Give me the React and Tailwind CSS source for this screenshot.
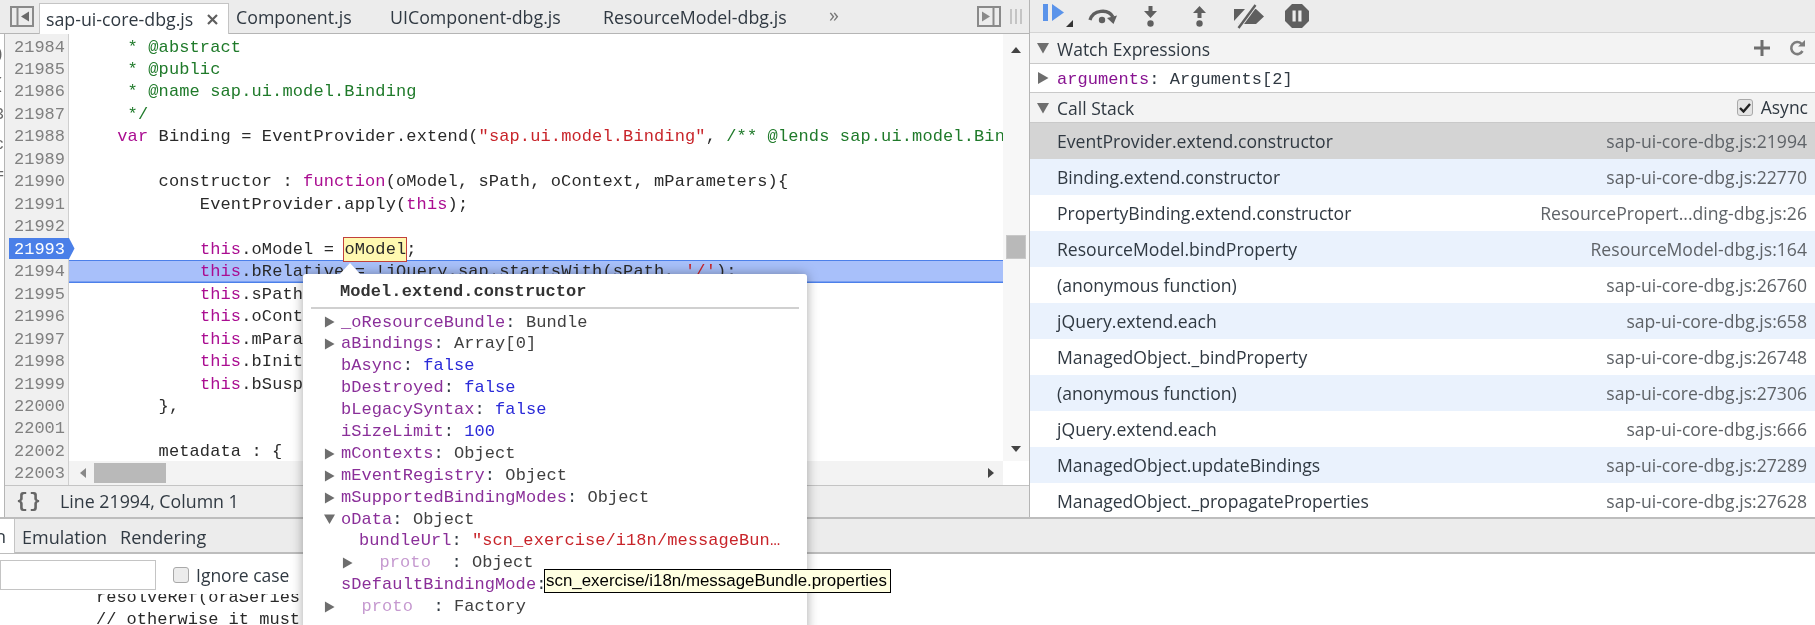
const P = 'text-[#aa0d91]';
const G = 'text-[#1f7a2a]';
const R = 'text-[#c8242a]';

const LINES = [
  [21984, [['     * @abstract', G]]],
  [21985, [['     * @public', G]]],
  [21986, [['     * @name sap.ui.model.Binding', G]]],
  [21987, [['     */', G]]],
  [21988, [['    '], ['var', P], [' Binding = EventProvider.extend('], ['"sap.ui.model.Binding"', R], [', '], ['/** @lends sap.ui.model.Binding.prototype */', G]]],
  [21989, []],
  [21990, [['        constructor : '], ['function', P], ['(oModel, sPath, oContext, mParameters){']]],
  [21991, [['            EventProvider.apply('], ['this', P], [');']]],
  [21992, []],
  [21993, [['            '], ['this', P], ['.oModel = '], ['oModel', 'hit'], [';']]],
  [21994, [['            '], ['this', P], ['.bRelative = !jQuery.sap.startsWith(sPath, '], ["'/'", R], [');']]],
  [21995, [['            '], ['this', P], ['.sPath = sPath;']]],
  [21996, [['            '], ['this', P], ['.oContext = oContext;']]],
  [21997, [['            '], ['this', P], ['.mParameters = mParameters;']]],
  [21998, [['            '], ['this', P], ['.bInitial = false;']]],
  [21999, [['            '], ['this', P], ['.bSuspended = false;']]],
  [22000, [['        },']]],
  [22001, []],
  [22002, [['        metadata : {']]],
];

const STACK = [
  ['EventProvider.extend.constructor', 'sap-ui-core-dbg.js:21994'],
  ['Binding.extend.constructor', 'sap-ui-core-dbg.js:22770'],
  ['PropertyBinding.extend.constructor', 'ResourcePropert...ding-dbg.js:26'],
  ['ResourceModel.bindProperty', 'ResourceModel-dbg.js:164'],
  ['(anonymous function)', 'sap-ui-core-dbg.js:26760'],
  ['jQuery.extend.each', 'sap-ui-core-dbg.js:658'],
  ['ManagedObject._bindProperty', 'sap-ui-core-dbg.js:26748'],
  ['(anonymous function)', 'sap-ui-core-dbg.js:27306'],
  ['jQuery.extend.each', 'sap-ui-core-dbg.js:666'],
  ['ManagedObject.updateBindings', 'sap-ui-core-dbg.js:27289'],
  ['ManagedObject._propagateProperties', 'sap-ui-core-dbg.js:27628'],
];

const PROPS = [
  { arrow: 'r', name: '_oResourceBundle', value: 'Bundle' },
  { arrow: 'r', name: 'aBindings', value: 'Array[0]' },
  { name: 'bAsync', value: 'false', blue: true },
  { name: 'bDestroyed', value: 'false', blue: true },
  { name: 'bLegacySyntax', value: 'false', blue: true },
  { name: 'iSizeLimit', value: '100', blue: true },
  { arrow: 'r', name: 'mContexts', value: 'Object' },
  { arrow: 'r', name: 'mEventRegistry', value: 'Object' },
  { arrow: 'r', name: 'mSupportedBindingModes', value: 'Object' },
  { arrow: 'd', name: 'oData', value: 'Object' },
  { name: 'bundleUrl', value: '"scn_exercise/i18n/messageBun…', red: true, nested: true },
  { arrow: 'r', name: '  proto  ', value: 'Object', faded: true, nested: true },
  { name: 'sDefaultBindingMode', value: '' },
  { arrow: 'r', name: '  proto  ', value: 'Factory', faded: true },
];

function Tri({ dir = 'r', className = '' }) {
  return (
    <svg viewBox="0 0 12 12" className={className} fill="#6e6e6e">
      {dir === 'r' ? <path d="M1 0 L11.5 6 L1 12 Z" /> : <path d="M0 1 H12 L6 11.5 Z" />}
    </svg>
  );
}

function DockIcon({ flip }) {
  return (
    <svg width="24" height="21" viewBox="0 0 24 21" fill="none" stroke="#8a8a8a" strokeWidth="2">
      <rect x="1" y="1" width="22" height="19" />
      {flip ? (
        <>
          <path d="M16.5 1 V20" />
          <path d="M5 5.5 L13 10.5 L5 15.5 Z" fill="#8a8a8a" stroke="none" />
        </>
      ) : (
        <>
          <path d="M7.5 1 V20" />
          <path d="M19 5.5 L11 10.5 L19 15.5 Z" fill="#6a6a6a" stroke="none" />
        </>
      )}
    </svg>
  );
}

function Toolbar() {
  return (
    <div className="h-[33px] shrink-0 bg-[#ececec] flex items-center border-b border-[#d4d4d4] relative">
      <svg className="ml-[13px] mt-[-1px]" width="31" height="26" viewBox="0 0 31 26">
        <rect x="0" y="1" width="5" height="17" fill="#5a93ea" />
        <path d="M9 1 L21 9.5 L9 18 Z" fill="#5a93ea" />
        <path d="M30 17 V24 H23 Z" fill="#333" />
      </svg>
      <svg className="ml-[14px]" width="30" height="18" viewBox="0 0 30 18">
        <path d="M2 13 C5 3 20 1 25 10" fill="none" stroke="#5f5f5f" strokeWidth="3.4" />
        <path d="M19 11 L29 8.5 L25.5 17 Z" fill="#5f5f5f" />
        <circle cx="14" cy="13" r="3.2" fill="#5f5f5f" />
      </svg>
      <svg className="ml-[25px]" width="15" height="21" viewBox="0 0 15 21">
        <path d="M5.5 0 H9.5 V5 H14 L7.5 12 L1 5 H5.5 Z" fill="#5f5f5f" />
        <circle cx="7.5" cy="17.5" r="3.2" fill="#5f5f5f" />
      </svg>
      <svg className="ml-[34px]" width="15" height="21" viewBox="0 0 15 21">
        <path d="M7.5 0 L14 7 H9.5 V12 H5.5 V7 H1 Z" fill="#5f5f5f" />
        <circle cx="7.5" cy="17.5" r="3.2" fill="#5f5f5f" />
      </svg>
      <svg className="ml-[27px]" width="30" height="25" viewBox="0 0 30 25">
        <path d="M0 5 H11 L0 17 Z M4 20 L18 5 H22 L30 12.5 L22 20 Z" fill="#5f5f5f" />
        <path d="M4 24 L21 1" stroke="#ececec" strokeWidth="5" />
        <path d="M4.5 24 L21.5 1" stroke="#5f5f5f" strokeWidth="2.4" />
      </svg>
      <svg className="ml-[21px]" width="24" height="24" viewBox="0 0 24 24">
        <path d="M7 0 H17 L24 7 V17 L17 24 H7 L0 17 V7 Z" fill="#5f5f5f" />
        <rect x="7.5" y="6.5" width="3.2" height="11" fill="#ececec" />
        <rect x="13.3" y="6.5" width="3.2" height="11" fill="#ececec" />
      </svg>
    </div>
  );
}

function SectionHeader({ title, children }) {
  return (
    <div className="flex-1 bg-[#f3f3f3] border-b border-[#c9c9c9] flex items-center text-[#303942]">
      <Tri dir="d" className="w-[12px] h-[12px] ml-[7px]" />
      <span className="ml-[8px] pt-[2px] text-[17.5px]">{title}</span>
      <div className="ml-auto flex items-center">{children}</div>
    </div>
  );
}

function RightPanel() {
  return (
    <div className="flex-1 flex flex-col overflow-hidden bg-white">
      <Toolbar />
      <div className="h-[31px] shrink-0 flex flex-col">
        <SectionHeader title="Watch Expressions">
          <svg className="mr-[19px]" width="16" height="16" viewBox="0 0 16 16">
            <path d="M8 0 V16 M0 8 H16" stroke="#6e6e6e" strokeWidth="3" />
          </svg>
          <svg className="mr-[10px]" width="16" height="16" viewBox="0 0 16 16" fill="none">
            <path d="M13.5 11 A6 6 0 1 1 12.5 3.8" stroke="#7d7d7d" strokeWidth="2.6" />
            <path d="M9 6.5 H16 V0 Z" fill="#7d7d7d" />
          </svg>
        </SectionHeader>
      </div>
      <div className="h-[29px] shrink-0 border-b border-[#c9c9c9] flex items-center font-['Liberation_Mono',monospace] text-[17px] tracking-[0.05px] whitespace-pre text-[#303942]">
        <Tri className="w-[12px] h-[12px] ml-[7px]" />
        <span className="ml-[8px] mt-[3px] text-[#881391]">arguments</span>
        <span className="mt-[3px]">: Arguments[2]</span>
      </div>
      <div className="h-[30px] shrink-0 flex flex-col">
        <SectionHeader title="Call Stack">
          <span className="w-[16px] h-[17px] mr-[8px] rounded-[3px] border border-[#a9a9a9] bg-[#e4e4e4] flex items-center justify-center">
            <svg width="12" height="10" viewBox="0 0 12 10" fill="none">
              <path d="M1 5 L4.5 8.5 L11 1" stroke="#222" strokeWidth="2.4" />
            </svg>
          </span>
          <span className="mr-[7px] text-[17.5px]">Async</span>
        </SectionHeader>
      </div>
      {STACK.map(([name, loc], i) => (
        <div
          key={i}
          className={`h-[36px] shrink-0 flex items-center justify-between pl-[27px] pr-[8px] text-[17.6px] ${
            i === 0 ? 'bg-[#d4d4d4]' : i % 2 === 1 ? 'bg-[#eaf2fd]' : 'bg-white'
          }`}
        >
          <span className="text-[#303942]">{name}</span>
          <span className="text-[#5f6368]">{loc}</span>
        </div>
      ))}
    </div>
  );
}

function TabBar() {
  return (
    <div className="h-[34px] shrink-0 bg-[#ececec] border-b border-[#b5b5b5] flex items-end text-[17.8px] text-[#303942] whitespace-nowrap">
      <div className="ml-[10px] mb-[6px]"><DockIcon /></div>
      <div className="ml-[5px] w-[190px] h-[31px] bg-white border border-b-0 border-[#c4c4c4] flex items-center pl-[6px] pt-[1px] mb-[-1px]">
        <span>sap-ui-core-dbg.js</span>
        <svg className="ml-auto mr-[10px]" width="11" height="11" viewBox="0 0 11 11">
          <path d="M1 1 L10 10 M10 1 L1 10" stroke="#5f5f5f" strokeWidth="2.2" />
        </svg>
      </div>
      <div className="h-[33px] w-[154px] flex items-center pt-[2px] ml-[7px]">Component.js</div>
      <div className="h-[33px] w-[213px] flex items-center pt-[2px]">UIComponent-dbg.js</div>
      <div className="h-[33px] w-[226px] flex items-center pt-[2px]">ResourceModel-dbg.js</div>
      <div className="h-[33px] flex items-center pb-[3px] text-[#777] text-[20px]">»</div>
      <div className="ml-auto mb-[6px] flex items-center">
        <DockIcon flip />
        <svg className="ml-[9px] mr-[7px]" width="12" height="15" viewBox="0 0 12 15">
          <path d="M1 0 V15 M6 0 V15 M11 0 V15" stroke="#c4c4c4" strokeWidth="2" />
        </svg>
      </div>
    </div>
  );
}

function CodeLine({ line, rowClass }) {
  return (
    <div className={`h-[22.47px] leading-[24px] whitespace-pre pl-[7px] ${rowClass}`}>
      {line.map(([text, cls], i) =>
        cls === 'hit' ? (
          <span key={i} className="relative">
            <span className="absolute left-[-1px] right-[-1px] top-[-3px] h-[25px] bg-[#fff9b0] border border-[#c2413c]" />
            <span className="relative">{text}</span>
          </span>
        ) : (
          <span key={i} className={cls}>{text}</span>
        )
      )}
    </div>
  );
}

function Editor() {
  return (
    <div className="h-[452px] shrink-0 flex border-b border-[#c4c4c4] font-['Liberation_Mono',monospace] text-[17px] text-[#2a2a2a] overflow-hidden">
      <div className="w-[64px] shrink-0 bg-[#f0f0f0] border-r border-[#cfcfcf] pt-[1.5px] text-[#808080] text-right">
        {[...LINES.map((l) => l[0]), 22003].map((n) =>
          n === 21993 ? (
            <div key={n} className="h-[22.47px] leading-[24px] pr-[3px] relative">
              <svg className="absolute left-[4px] top-[0px]" width="66" height="21" viewBox="0 0 66 21">
                <path d="M0 0 H60 L65.5 10.5 L60 21 H0 Z" fill="#4a7fe8" />
              </svg>
              <span className="relative text-white">{n}</span>
            </div>
          ) : (
            <div key={n} className="h-[22.47px] leading-[24px] pr-[3px]">{n}</div>
          )
        )}
      </div>
      <div className="flex-1 min-w-0 flex flex-col">
        <div className="flex-1 flex min-h-0">
          <div className="flex-1 min-w-0 pt-[1.5px] overflow-hidden tracking-[0.12px]">
            {LINES.map(([n, line]) => (
              <CodeLine
                key={n}
                line={line}
                rowClass={n === 21994 ? 'bg-[#a8c0fa] shadow-[inset_0_1px_0_#4c80ea,inset_0_-1.5px_0_#4c80ea]' : ''}
              />
            ))}
          </div>
          <div className="w-[26px] shrink-0 bg-[#f7f7f7] flex flex-col items-center">
            <svg className="mt-[13px]" width="10" height="6" viewBox="0 0 10 6"><path d="M5 0 L10 6 H0 Z" fill="#444" /></svg>
            <div className="w-[20px] h-[24px] mt-[182px] bg-[#b9b9b9] border border-[#c8c8c8]" />
            <svg className="mt-[187px]" width="10" height="6" viewBox="0 0 10 6"><path d="M0 0 H10 L5 6 Z" fill="#444" /></svg>
          </div>
        </div>
        <div className="h-[24px] shrink-0 flex">
          <div className="flex-1 bg-[#f3f3f3] flex items-center">
            <svg className="ml-[11px]" width="6" height="10" viewBox="0 0 6 10"><path d="M6 0 V10 L0 5 Z" fill="#888" /></svg>
            <div className="ml-[8px] w-[72px] h-[20px] bg-[#b9b9b9]" />
            <svg className="ml-auto mr-[9px]" width="6" height="10" viewBox="0 0 6 10"><path d="M0 0 V10 L6 5 Z" fill="#444" /></svg>
          </div>
          <div className="w-[26px] bg-white" />
        </div>
      </div>
    </div>
  );
}

function LeftPanel() {
  return (
    <div className="w-[1030px] shrink-0 flex flex-col border-r border-[#b5b5b5]">
      <TabBar />
      <div className="flex-1 flex min-h-0">
        <div className="w-[5px] shrink-0 bg-white border-r border-[#b5b5b5] overflow-hidden font-['Liberation_Mono',monospace] text-[16px] leading-[30px] text-[#666]">
          <div className="w-[10px] ml-[-6px] pt-[6px] text-right whitespace-pre">
            <div>)</div><div>(</div><div>3</div><div>c</div><div>=</div>
          </div>
        </div>
        <div className="flex-1 min-w-0 flex flex-col">
          <Editor />
          <div className="flex-1 bg-[#eeeeee] flex items-center text-[17.8px] text-[#303942]">
            <span className="ml-[11px] font-['Liberation_Mono',monospace] font-bold text-[20px] text-[#666] tracking-[1px]">{'{}'}</span>
            <span className="ml-[18px]">Line 21994, Column 1</span>
          </div>
        </div>
      </div>
    </div>
  );
}

function Drawer() {
  return (
    <div className="flex-1 flex flex-col min-h-0 overflow-hidden">
      <div className="h-[37px] shrink-0 bg-[#ececec] border-t-2 border-b-2 border-[#bdbdbd] flex text-[18px] text-[#303942]">
        <div className="w-[60px] ml-[-45px] bg-white border-r border-[#c4c4c4] flex items-center justify-end pr-[8px] mb-[-1px]">Search</div>
        <div className="flex items-center pt-[4px] ml-[7px]">Emulation</div>
        <div className="flex items-center pt-[4px] ml-[13px]">Rendering</div>
      </div>
      <div className="h-[40px] shrink-0 flex items-center bg-white">
        <div className="w-[156px] h-[30px] mt-[2px] bg-white border border-[#c4c4c4]" />
        <span className="ml-[17px] mt-[2px] w-[16px] h-[16px] rounded-[3px] border border-[#a9a9a9] bg-[#ececec]" />
        <span className="ml-[7px] mt-[2px] text-[17.5px] text-[#303942]">Ignore case</span>
      </div>
      <div className="flex-1 min-h-0 overflow-hidden font-['Liberation_Mono',monospace] text-[17px] text-[#2a2a2a] pl-[96px] whitespace-pre">
        <div className="h-[22.47px] leading-[22.47px] mt-[-7px]">resolveRef(oraSeries</div>
        <div className="h-[22.47px] leading-[22.47px]">// otherwise it must</div>
      </div>
    </div>
  );
}

function Popover() {
  return (
    <div className="absolute left-[303px] top-[274px] w-[504px] h-[360px] bg-white rounded-t-[3px] shadow-[0_0_12px_rgba(0,0,0,0.35)] font-['Liberation_Mono',monospace] text-[17px] tracking-[0.07px]">
      <svg className="absolute left-[36px] top-[-11px]" width="22" height="12" viewBox="0 0 22 12">
        <path d="M0 12 L11 0 L22 12 Z" fill="#fff" />
      </svg>
      <div className="h-[35px] mx-[8px] border-b-2 border-[#d0d0d0] pl-[29px] pt-[7px] font-bold text-[#333] leading-[22px]">
        Model.extend.constructor
      </div>
      <div className="pl-[21px] pt-[2.5px]">
        {PROPS.map((p, i) => (
          <div key={i} className={`h-[21.9px] leading-[21.9px] flex items-center whitespace-pre ${p.nested ? 'pl-[18px]' : ''}`}>
            <span className="w-[17px] shrink-0">
              {p.arrow && <Tri dir={p.arrow} className="w-[11px] h-[12px]" />}
            </span>
            <span className={p.faded ? 'text-[#c69ad0]' : 'text-[#8a2f99]'}>{p.name}</span>
            <span className="text-[#303942]">{p.value ? ': ' : ':'}</span>
            <span className={p.blue ? 'text-[#2a2ad8]' : p.red ? 'text-[#c8242a]' : 'text-[#404040]'}>{p.value}</span>
          </div>
        ))}
      </div>
    </div>
  );
}

export default function App() {
  return (
    <div className="w-[1815px] h-[625px] relative overflow-hidden flex flex-col bg-white font-['Open_Sans',sans-serif] blur-[0.35px]">
      <div className="h-[517px] shrink-0 flex">
        <LeftPanel />
        <RightPanel />
      </div>
      <Drawer />
      <Popover />
      <div className="absolute left-[544px] top-[569px] w-[347px] h-[24px] bg-[#ffffe1] border-[1.5px] border-black flex items-center pl-[1px] font-['Liberation_Sans',sans-serif] text-[16.9px] text-black whitespace-nowrap">
        scn_exercise/i18n/messageBundle.properties
      </div>
    </div>
  );
}
